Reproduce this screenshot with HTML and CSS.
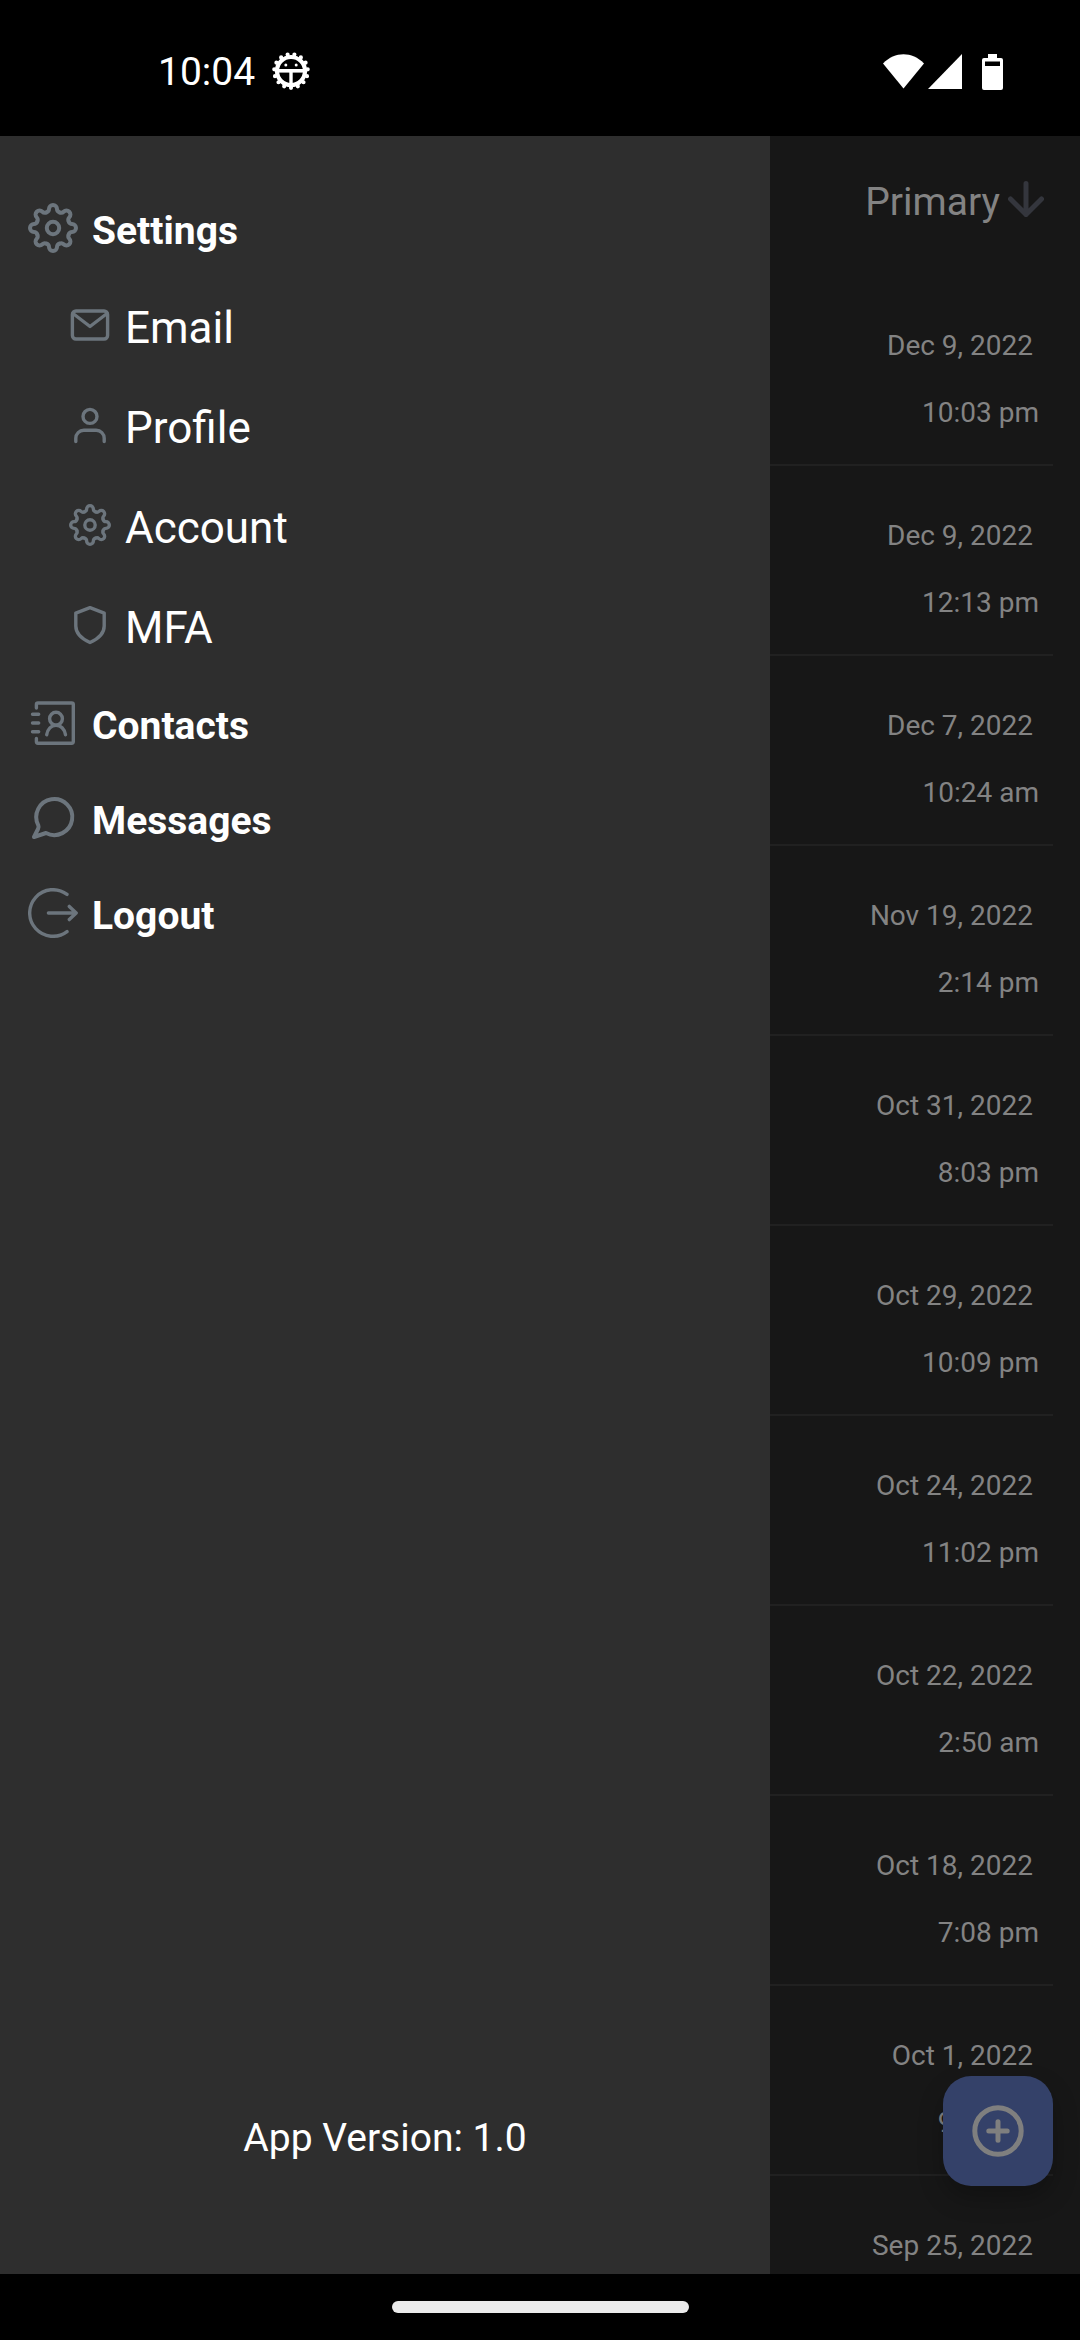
FILE: index.html
```html
<!DOCTYPE html>
<html lang="en">
<head>
<meta charset="utf-8">
<meta name="viewport" content="width=device-width, initial-scale=1">
<title>Messages</title>
<link rel="stylesheet" href="styles.css">
</head>
<body>
<svg class="sprite" aria-hidden="true">
  <symbol id="gear" viewBox="-25 -25 50 50">
    <g id="teeth">
      <path id="tooth" d="M-6.5 -15.7C-4.7 -16.4 -4 -17.6 -4 -19A4 4 0 0 1 4 -19C4 -17.6 4.7 -16.4 6.5 -15.7"/>
      <use href="#tooth" transform="rotate(45)"/>
      <use href="#tooth" transform="rotate(90)"/>
      <use href="#tooth" transform="rotate(135)"/>
      <use href="#tooth" transform="rotate(180)"/>
      <use href="#tooth" transform="rotate(225)"/>
      <use href="#tooth" transform="rotate(270)"/>
      <use href="#tooth" transform="rotate(315)"/>
    </g>
    <circle r="6.2"/>
  </symbol>
</svg>
<div class="app">
  <header class="status">
    <span class="clock">10:04</span>
    <svg class="bug" viewBox="-20 -20 40 40" aria-hidden="true">
      <g fill="none" stroke="#fff">
        <circle r="14" stroke-width="4.2"/>
        <circle r="16.8" stroke-width="4.2" stroke-linecap="round" pathLength="15" stroke-dasharray="0 1" transform="rotate(90)"/>
        <path d="M-13 -.2H13" stroke-width="3.6"/>
        <path d="M0 0V14" stroke-width="3.4"/>
      </g>
      <circle cx="-5.2" cy="-6" r="1.5" fill="#fff"/>
      <circle cx="5.2" cy="-6" r="1.5" fill="#fff"/>
    </svg>
    <div class="signals">
      <svg width="41" height="36" viewBox="0 0 41 36" aria-hidden="true"><path fill="#fff" d="M0 9.5C12 -2.8 29 -2.8 41 9.5L20.5 34.5Z"/></svg>
      <svg width="34" height="36" viewBox="0 0 34 36" aria-hidden="true"><path fill="#fff" d="M34 0V35H0Z"/></svg>
      <svg class="battery" width="21" height="36" viewBox="0 0 21 36" aria-hidden="true"><path fill="#fff" fill-rule="evenodd" d="M6 0H15V4H19Q21 4 21 6V34Q21 36 19 36H2Q0 36 0 34V6Q0 4 2 4H6ZM3 7.5V12H18V7.5Z"/></svg>
    </div>
  </header>

  <div class="screen">
    <main class="messages">
      <div class="toolbar">
        <button class="sort" type="button">Primary
          <svg width="36" height="36" viewBox="0 0 36 36" aria-hidden="true"><path d="M18 2.5V33.5M2.5 18L18 33.5L33.5 18"/></svg>
        </button>
      </div>
      <ul class="list">
        <li><span class="date">Dec 9, 2022</span><span>10:03 pm</span></li>
        <li><span class="date">Dec 9, 2022</span><span>12:13 pm</span></li>
        <li><span class="date">Dec 7, 2022</span><span>10:24 am</span></li>
        <li><span class="date">Nov 19, 2022</span><span>2:14 pm</span></li>
        <li><span class="date">Oct 31, 2022</span><span>8:03 pm</span></li>
        <li><span class="date">Oct 29, 2022</span><span>10:09 pm</span></li>
        <li><span class="date">Oct 24, 2022</span><span>11:02 pm</span></li>
        <li><span class="date">Oct 22, 2022</span><span>2:50 am</span></li>
        <li><span class="date">Oct 18, 2022</span><span>7:08 pm</span></li>
        <li><span class="date">Oct 1, 2022</span><span>9:03 pm</span></li>
        <li><span class="date">Sep 25, 2022</span></li>
      </ul>
      <button class="fab" type="button" aria-label="New message">
        <svg width="52" height="52" viewBox="-26 -26 52 52" aria-hidden="true"><circle r="23.2"/><path d="M-9.2 0H9.2M0 -9.2V9.2"/></svg>
      </button>
    </main>

    <aside class="drawer">
      <nav>
        <ul class="menu">
          <li>
            <a href="#settings"><svg class="icon gear" aria-hidden="true"><use href="#gear"/></svg>Settings</a>
            <ul class="submenu">
              <li><a href="#email"><svg class="icon" viewBox="-21 -21 42 42" aria-hidden="true"><rect x="-17.6" y="-14" width="35.2" height="28" rx="3.5"/><path d="M-17 -11.5L0 1.5L17 -11.5"/></svg>Email</a></li>
              <li><a href="#profile"><svg class="icon" viewBox="-21 -21 42 42" aria-hidden="true"><circle cy="-8.6" r="7"/><path d="M-14.2 16.5V13.3A8 8 0 0 1 -6.2 5.3H6.2A8 8 0 0 1 14.2 13.3V16.5"/></svg>Profile</a></li>
              <li><a href="#account"><svg class="icon gear" aria-hidden="true"><use href="#gear"/></svg>Account</a></li>
              <li><a href="#mfa"><svg class="icon" viewBox="-21 -21 42 42" aria-hidden="true"><path d="M0 -17.3L14.2 -11.9V1C14.2 8.6 7.5 14.2 0 17.5C-7.5 14.2 -14.2 8.6 -14.2 1V-11.9Z"/></svg>MFA</a></li>
            </ul>
          </li>
          <li><a href="#contacts"><svg class="icon" viewBox="-25 -25 50 50" aria-hidden="true"><path d="M-16.6 -15V-18.5Q-16.6 -20 -15 -20H18.6Q20.3 -20 20.3 -18.5V18.5Q20.3 20.2 18.6 20.2H-15Q-16.6 20.2 -16.6 18.5V15.5M-20.5 -8.7H-14.3M-20.5 0H-14.3M-20.5 8.7H-14.3"/><circle cx="3" cy="-4.3" r="6.4"/><path d="M-6.3 11.8C-5.6 6 -1.6 2.2 3 2.2S11.6 6 12.5 11.8"/></svg>Contacts</a></li>
          <li><a href="#messages"><svg class="icon bubble" viewBox="-25 -25 50 50" aria-hidden="true"><path d="M-14.7 7.3A18 18 0 1 1 -7 15L-19 19L-15 11Q-14 9 -14.7 7.3Z"/></svg>Messages</a></li>
          <li><a href="#logout"><svg class="icon" viewBox="-25 -25 50 50" aria-hidden="true"><path d="M14 -18.6A23.3 23.3 0 1 0 14 18.6M-4.6 0H23.2M16.3 -6.6L23.2 0L16.3 6.6"/></svg>Logout</a></li>
        </ul>
      </nav>
      <p class="version">App Version: 1.0</p>
    </aside>
  </div>

  <footer class="gesture"><span class="handle"></span></footer>
</div>
</body>
</html>
```

FILE: styles.css
```css
* {
  box-sizing: border-box;
}

body {
  margin: 0;
  background: #000;
  color: #fff;
  font: 39px/46px Roboto, sans-serif;
}

ul {
  margin: 0;
  padding: 0;
  list-style: none;
}

button {
  border: 0;
  font: inherit;
}

svg {
  display: block;
  flex: none;
}

.sprite {
  position: absolute;
  width: 0;
  height: 0;
}

.app {
  display: flex;
  flex-direction: column;
  height: 100vh;
}

/* System status bar */
.status {
  display: flex;
  flex: none;
  align-items: center;
  height: 136px;
  padding: 8px 77px 0 158px;
}

.bug {
  width: 40px;
  height: 40px;
  margin: 0 0 2px 16px;
}

.signals {
  display: flex;
  gap: 4px;
  margin-left: auto;
}

.battery {
  margin-left: 16px;
}

/* Message list, dimmed while the drawer is open */
.screen {
  position: relative;
  flex: 1;
  min-height: 0;
  overflow: hidden;
  background: #171717;
}

.messages {
  position: relative;
  height: 100%;
  color: #838383;
}

.toolbar {
  display: flex;
  justify-content: flex-end;
  align-items: center;
  height: 140px;
  padding: 0 36px 8px;
}

.sort {
  display: flex;
  align-items: center;
  gap: 8px;
  padding: 0;
  background: none;
  color: inherit;
}

.sort svg {
  margin-bottom: 6px;
  fill: none;
  stroke: #34363d;
  stroke-width: 5;
  stroke-linecap: round;
  stroke-linejoin: round;
}

.list {
  padding: 0 27px;
}

.list li {
  display: flex;
  flex-direction: column;
  align-items: flex-end;
  gap: 34px;
  padding: 53px 14px 35px;
  border-bottom: 2px solid #212121;
  font-size: 28px;
  line-height: 33px;
}

.date {
  padding-right: 6px;
}

.fab {
  position: absolute;
  right: 27px;
  bottom: 88px;
  display: grid;
  place-items: center;
  width: 110px;
  height: 110px;
  padding: 0;
  border-radius: 28px;
  background: #344169;
  box-shadow: 0 12px 24px rgba(0, 0, 0, .25);
}

.fab svg {
  fill: none;
  stroke: #7f7f7f;
  stroke-width: 5;
  stroke-linecap: round;
}

/* Navigation drawer */
.drawer {
  position: absolute;
  inset: 0 auto 0 0;
  display: flex;
  flex-direction: column;
  justify-content: space-between;
  width: 71.3%;
  padding: 47px 28px 113px;
  background: #2e2e2e;
}

.menu a {
  display: flex;
  align-items: center;
  gap: 14px;
  height: 95px;
  color: #fff;
  font-weight: 700;
  text-decoration: none;
}

.menu .submenu a {
  height: 100px;
  padding-left: 41px;
  font-size: 44px;
  font-weight: 400;
}

.icon {
  width: 50px;
  height: 50px;
  margin-bottom: 6px;
  fill: none;
  stroke: #6c757d;
  stroke-width: 3.4;
  stroke-linecap: round;
  stroke-linejoin: round;
}

.submenu .icon {
  width: 42px;
  height: 42px;
}

.gear,
.bubble {
  stroke-width: 4;
}

.version {
  margin: 0;
  text-align: center;
}

/* Gesture bar */
.gesture {
  display: grid;
  flex: none;
  place-items: center;
  height: 66px;
}

.handle {
  width: 297px;
  height: 12px;
  border-radius: 6px;
  background: #ebebeb;
}
```
